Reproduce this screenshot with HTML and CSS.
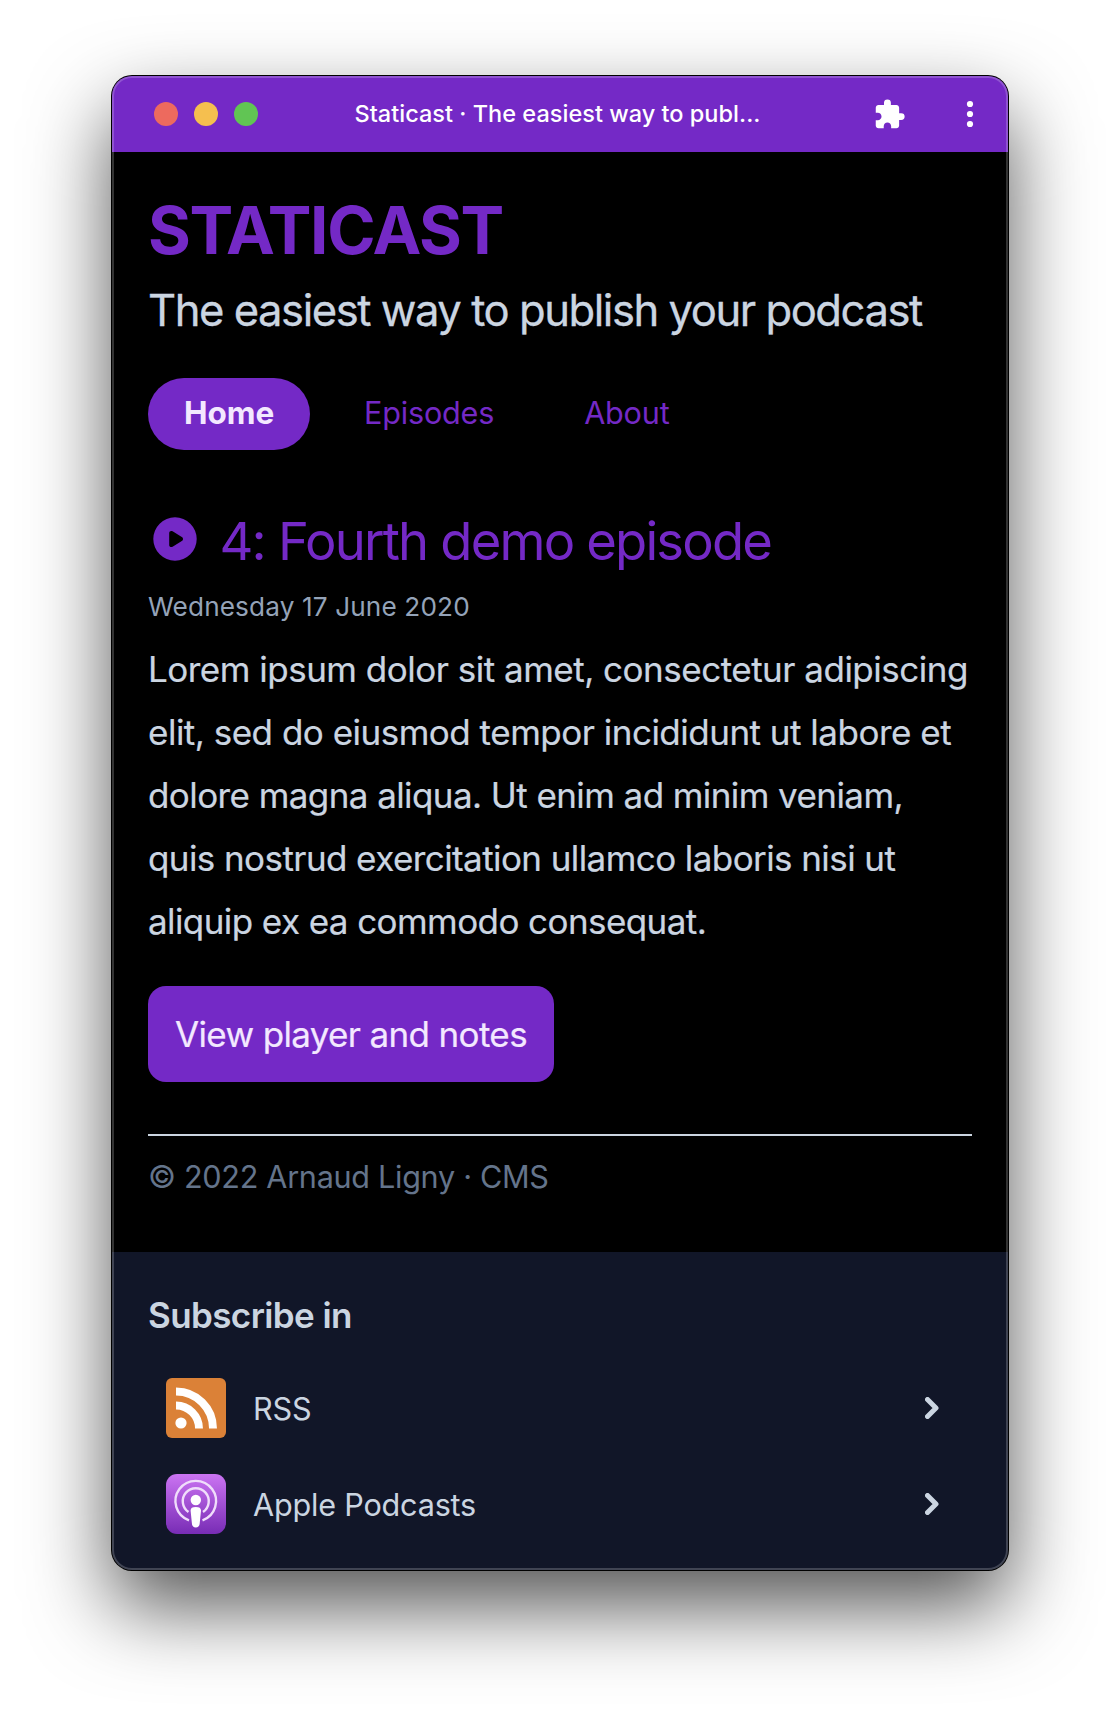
FILE: index.html
```html
<!DOCTYPE html>
<html lang="en">
<head>
<meta charset="utf-8">
<title>Staticast · The easiest way to publish your podcast</title>
<link rel="stylesheet" href="styles.css">
</head>
<body>
<div class="window">
  <header class="titlebar">
    <div class="lights"><i class="light red"></i><i class="light yellow"></i><i class="light green"></i></div>
    <span class="window-title">Staticast · The easiest way to publ...</span>
    <svg class="puzzle" viewBox="0 0 24 24"><path d="M20.500 11H19V7c0-1.100-.9-2-2-2h-4V3.500a2.500 2.500 0 0 0-5 0V5H4c-1.100 0-1.990.9-1.990 2v3.800H3.500c1.490 0 2.700 1.210 2.700 2.700s-1.210 2.700-2.700 2.700H2V20c0 1.100.9 2 2 2h3.800v-1.500c0-1.490 1.210-2.700 2.700-2.700s2.700 1.210 2.700 2.700V22H17c1.100 0 2-.9 2-2v-4h1.500a2.500 2.500 0 0 0 0-5z"/></svg>
    <svg class="dots" viewBox="0 0 8 28"><circle cx="4" cy="4" r="3.100"/><circle cx="4" cy="14" r="3.100"/><circle cx="4" cy="24" r="3.100"/></svg>
  </header>
  <main class="page">
    <h1 class="brand">STATICAST</h1>
    <p class="tagline">The easiest way to publish your podcast</p>
    <nav class="nav"><a class="tab active">Home</a><a class="tab">Episodes</a><a class="tab">About</a></nav>
    <article class="episode">
      <h2 class="episode-title">
        <svg class="play" viewBox="0 0 44 44"><path fill-rule="evenodd" d="M22 .3a21.700 21.700 0 1 0 0 43.400a21.700 21.700 0 0 0 0-43.400zM19.600 14.300l9.200 5.600a2.400 2.400 0 0 1 0 4.200l-9.200 5.600c-1.600 1-3.400.1-3.400-1.800V16.100c0-1.900 1.800-2.800 3.400-1.800z"/></svg>
        <span>4: Fourth demo episode</span>
      </h2>
      <p class="date">Wednesday 17 June 2020</p>
      <p class="summary">
        Lorem ipsum dolor sit amet, consectetur adipiscing<br>
        elit, sed do eiusmod tempor incididunt ut labore et<br>
        <span class="tight">dolore magna aliqua. Ut enim ad minim veniam,<br>
        quis nostrud exercitation ullamco laboris nisi ut<br>
        aliquip ex ea commodo consequat.</span>
      </p>
      <a class="button">View player and notes</a>
    </article>
    <footer class="footer">© 2022 Arnaud Ligny · CMS</footer>
  </main>
  <aside class="subscribe">
    <h3 class="subscribe-title">Subscribe in</h3>
    <a class="row">
      <svg class="app" viewBox="0 0 60 60"><rect width="60" height="60" rx="6" fill="#db8137"/><circle cx="15" cy="45" r="5.600" fill="#fff"/><path d="M10 27.500A23 23 0 0 1 33 50.500M10 13.500A37 37 0 0 1 47 50.500" fill="none" stroke="#fff" stroke-width="7.900"/></svg>
      <span class="label">RSS</span>
      <svg class="chevron" viewBox="0 0 14 22"><path d="M2.500 2.500L11 11L2.500 19.500"/></svg>
    </a>
    <a class="row">
      <svg class="app" viewBox="0 0 60 60"><defs><linearGradient id="pod" x2="0" y2="1"><stop stop-color="#cb74f2"/><stop offset="1" stop-color="#782cb5"/></linearGradient></defs><rect width="60" height="60" rx="11" fill="url(#pod)"/><g fill="none" stroke="#f0ddfb" stroke-width="2.400"><path d="M23 46.300A20.300 20.300 0 1 1 36.500 46.300"/><path d="M22.500 38A13 13 0 1 1 37 38"/></g><circle cx="29.800" cy="26" r="5.200" fill="#fff"/><path d="M29.800 33c3.500 0 5.200 1 5.200 3.500l-1.300 13c-.3 2.600-1.400 3.900-3.900 3.900s-3.600-1.300-3.900-3.900l-1.300-13c0-2.500 1.700-3.500 5.200-3.500z" fill="#fff"/></svg>
      <span class="label">Apple Podcasts</span>
      <svg class="chevron" viewBox="0 0 14 22"><path d="M2.500 2.500L11 11L2.500 19.500"/></svg>
    </a>
  </aside>
</div>
</body>
</html>
```
FILE: styles.css
```css
* { box-sizing: border-box; }
body { margin: 0; background: #fff; font-family: Inter, "Liberation Sans", sans-serif; height: 1718px; padding: 76px 112px; overflow: hidden; }
h1, h2, h3, p { margin: 0; font-weight: 400; }
svg { display: block; flex: none; }
.window { position: relative; width: 896px; height: 1494px; border-radius: 20px; background: #000; box-shadow: 0 0 0 1px #000, 0 36px 82px rgba(0,0,0,.68); display: flex; flex-direction: column; }
.window::after { content: ""; position: absolute; inset: 0; border-radius: 20px; box-shadow: inset 0 0 0 2px rgba(255,255,255,.2); }
.titlebar { height: 76px; flex: none; background: #7429c6; border-radius: 20px 20px 0 0; display: flex; align-items: center; padding: 0 34px 0 42px; color: #fff; }
.lights { display: flex; flex: none; gap: 16px; width: 200.500px; }
.light { width: 24px; height: 24px; border-radius: 50%; }
.red { background: #ed6a5e; }
.yellow { background: #f5bf4f; }
.green { background: #61c554; }
.window-title { flex: 1; font-size: 23.500px; font-weight: 500; letter-spacing: .02px; white-space: nowrap; line-height: 76px; }
.puzzle { width: 33px; height: 33px; fill: #fff; margin-right: 59.700px; }
.dots { width: 8px; height: 28px; fill: #fff; }
.page { height: 1100px; flex: none; padding: 45px 36px 0; white-space: nowrap; }
.brand { color: #7429c6; font-weight: 700; font-size: 65.500px; line-height: 68px; letter-spacing: -1.370px; }
.tagline { color: #cbd5e1; font-size: 43.600px; line-height: 63px; letter-spacing: -1.470px; margin-top: 13.500px; -webkit-text-stroke: .3px; }
.nav { display: flex; gap: 18px; margin-top: 36px; }
.tab { height: 72px; line-height: 70px; padding: 0 36px; border-radius: 36px; font-size: 30.600px; letter-spacing: -.2px; color: #7429c6; }
.active { background: #7429c6; color: #f3e8ff; font-weight: 700; font-size: 31.500px; letter-spacing: 0; width: 162px; }
.episode-title { color: #7429c6; font-size: 52.500px; line-height: 68px; letter-spacing: -1.800px; display: flex; margin-top: 57px; }
.play { width: 44px; height: 44px; fill: #7429c6; margin: 10px 22.500px 0 5px; }
.date { color: #94a3b8; font-size: 26.200px; line-height: 36px; letter-spacing: .12px; margin-top: 14.500px; }
.summary { color: #cbd5e1; font-size: 35px; line-height: 63px; letter-spacing: -.5px; margin-top: 13px; -webkit-text-stroke: .2px; }
.tight { letter-spacing: -.580px; }
.button { display: block; width: 406px; height: 96px; line-height: 96px; margin-top: 33px; padding-left: 27px; border-radius: 18px; background: #7429c6; color: #f3e8ff; font-size: 35px; letter-spacing: -.650px; -webkit-text-stroke: .2px; }
.footer { margin-top: 52px; border-top: 2px solid #cbd5e1; padding-top: 14px; color: #64748b; font-size: 30.600px; line-height: 54px; letter-spacing: -.3px; }
.subscribe { flex: 1; background: #111628; border-radius: 0 0 20px 20px; padding: 36px 36px 0; color: #cbd5e1; }
.subscribe-title { font-size: 35px; line-height: 54px; font-weight: 600; letter-spacing: -.6px; margin-bottom: 18px; }
.row { display: flex; align-items: center; height: 96px; padding: 0 33px 0 18px; }
.app { width: 60px; height: 60px; }
.label { font-size: 30.600px; letter-spacing: -.2px; margin-left: 27px; flex: 1; }
.chevron { width: 14px; height: 22px; fill: none; stroke: #cbd5e1; stroke-width: 5; stroke-linecap: round; stroke-linejoin: round; }
```
